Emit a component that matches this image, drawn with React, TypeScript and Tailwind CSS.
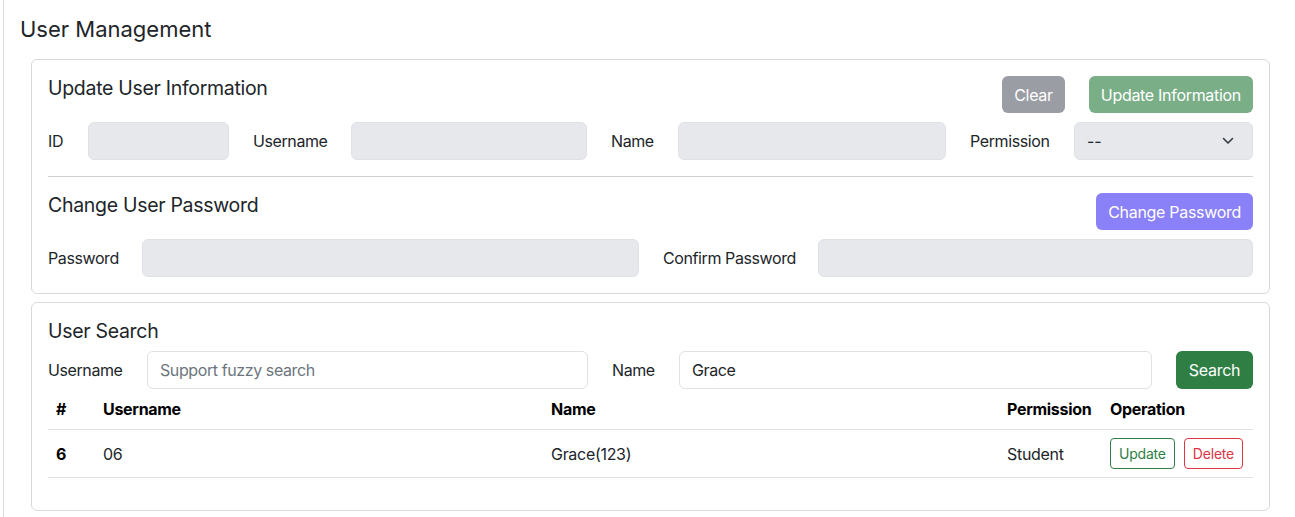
import React from "react";

const font = { fontFamily: "Inter, 'Noto Sans', 'Liberation Sans', sans-serif" };

function Label({ w, children }: { w: string; children: React.ReactNode }) {
	return <div className={`${w} shrink-0 text-[16px] tracking-[-0.4px] text-[#212529] whitespace-nowrap`}>{children}</div>;
}

function DisabledInput({ w }: { w: string }) {
	return <div className={`${w} h-[38px] rounded-[6px] border border-[#dee2e6] bg-[#e6e8ec]`} />;
}

export default function App() {
	return (
		<div className="w-[1295px] h-[517px] bg-white overflow-hidden pl-[3px]" style={font}>
			<div className="h-full border-l border-[#dcdcdc] pl-4 pt-[15px]">
				<h1 className="text-[22px] leading-[28px] text-[#212529] font-normal">User Management</h1>

				<div className="ml-[11px] w-[1239px] mt-[16px] flex flex-col gap-2">
					{/* update user info card */}
					<div className="border border-[#d9d9dc] rounded-[6px] px-4 pt-4 pb-4">
						<div className="flex items-start justify-between">
							<h2 className="text-[19.5px] tracking-[-0.3px] leading-[24px] text-[#212529]">Update User Information</h2>
							<div className="flex gap-6">
								<button className="h-[37px] px-3 rounded-[6px] bg-[#9b9da4] text-white text-[16px] tracking-[-0.3px]">Clear</button>
								<button className="h-[37px] px-3 rounded-[6px] bg-[#79ae87] text-white text-[16px] tracking-[-0.3px]">Update Information</button>
							</div>
						</div>
						<div className="mt-[9px] flex items-center gap-6">
							<Label w="w-[16px]">ID</Label>
							<DisabledInput w="w-[141px]" />
							<Label w="w-[74px]">Username</Label>
							<DisabledInput w="w-[236px]" />
							<Label w="w-[43px]">Name</Label>
							<DisabledInput w="w-[268px]" />
							<Label w="w-[80px]">Permission</Label>
							<div className="flex-1 h-[38px] rounded-[6px] border border-[#dee2e6] bg-[#e6e8ec] flex items-center justify-between pl-3 pr-[18px] text-[16px] text-[#212529]">
								<span>--</span>
								<svg width="12" height="8" viewBox="0 0 12 8" fill="none">
									<path d="M1.5 1.5 L6 6 L10.5 1.5" stroke="#343a40" strokeWidth="1.6" strokeLinecap="round" strokeLinejoin="round" />
								</svg>
							</div>
						</div>

						<div className="my-4 border-t border-[#cfd1d4]" />

						<div className="flex items-start justify-between">
							<h2 className="text-[19.5px] tracking-[-0.3px] leading-[24px] text-[#212529]">Change User Password</h2>
							<button className="h-[37px] px-3 rounded-[6px] bg-[#8a80f8] text-white text-[16px] tracking-[-0.3px]">Change Password</button>
						</div>
						<div className="mt-[9px] flex items-center gap-6">
							<Label w="w-[70px]">Password</Label>
							<DisabledInput w="w-[497px]" />
							<Label w="w-[131px]">Confirm Password</Label>
							<DisabledInput w="flex-1" />
						</div>
					</div>

					{/* user search card */}
					<div className="border border-[#d9d9dc] rounded-[6px] px-4 pt-4 pb-8">
						<h2 className="text-[19.5px] tracking-[-0.3px] leading-[24px] text-[#212529]">User Search</h2>
						<div className="mt-2 flex items-center gap-6">
							<Label w="w-[75px]">Username</Label>
							<div className="w-[441px] h-[38px] rounded-[6px] border border-[#dee2e6] bg-white flex items-center px-3 text-[16px] tracking-[-0.4px] text-[#6c757d]">
								Support fuzzy search
							</div>
							<Label w="w-[43px]">Name</Label>
							<div className="flex-1 h-[38px] rounded-[6px] border border-[#dee2e6] bg-white flex items-center px-3 text-[16px] tracking-[-0.4px] text-[#212529]">
								Grace
							</div>
							<button className="w-[77px] h-[38px] rounded-[6px] bg-[#2f7f45] text-white text-[16px] tracking-[-0.3px]">Search</button>
						</div>

						<table className="w-full mt-0 text-[16px] tracking-[-0.3px] text-[#212529] border-collapse">
							<thead>
								<tr className="border-b border-[#dee2e6]">
									<th className="w-[47px] text-left font-bold px-2 py-2 leading-6 text-black">#</th>
									<th className="w-[448px] text-left font-bold px-2 py-2 leading-6 text-black">Username</th>
									<th className="w-[456px] text-left font-bold px-2 py-2 leading-6 text-black">Name</th>
									<th className="w-[103px] text-left font-bold px-2 py-2 leading-6 text-black">Permission</th>
									<th className="text-left font-bold px-2 py-2 leading-6 text-black">Operation</th>
								</tr>
							</thead>
							<tbody>
								<tr className="border-b border-[#dee2e6]">
									<td className="px-2 py-2 font-bold text-black">6</td>
									<td className="px-2 py-2">06</td>
									<td className="px-2 py-2">Grace(123)</td>
									<td className="px-2 py-2">Student</td>
									<td className="px-2 py-2">
										<div className="flex gap-[9px]">
											<button className="h-[31px] px-2 rounded-[4px] border border-[#2f7f45] text-[#2f7f45] text-[14px] tracking-[-0.2px]">Update</button>
											<button className="h-[31px] px-2 rounded-[4px] border border-[#dc3545] text-[#dc3545] text-[14px] tracking-[-0.2px]">Delete</button>
										</div>
									</td>
								</tr>
							</tbody>
						</table>
					</div>
				</div>
			</div>
		</div>
	);
}
